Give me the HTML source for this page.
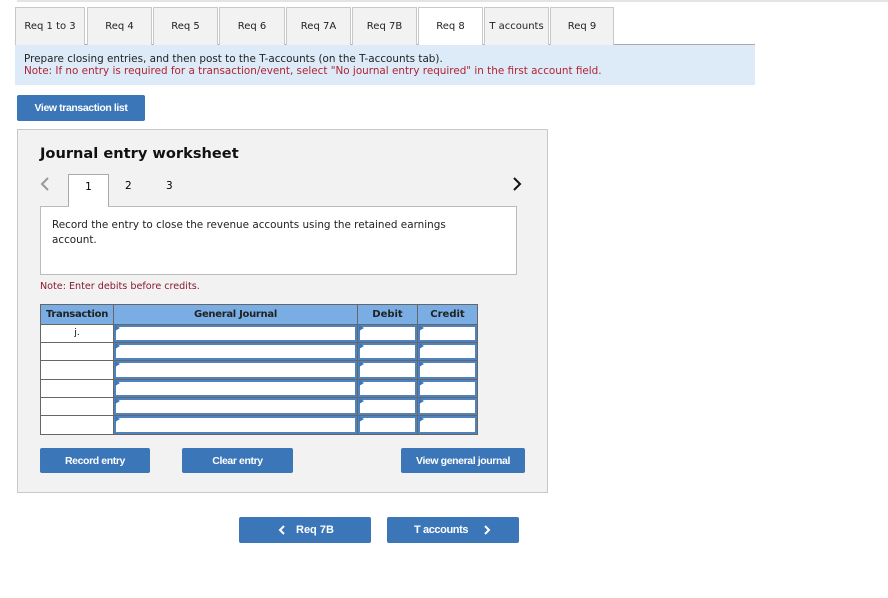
<!DOCTYPE html>
<html><head><meta charset="utf-8"><style>
*{box-sizing:border-box;margin:0;padding:0}
body{width:888px;height:598px;background:#fff;position:relative;font-family:"DejaVu Sans",Verdana,sans-serif;overflow:hidden}
.a{position:absolute}
.tab{position:absolute;top:7px;height:38px;background:#f2f2f2;border:1px solid #c8c8c8;border-bottom:none;font-size:10px;color:#222;text-align:center;line-height:38px}
.tab.on{background:#fff}
.btn{position:absolute;background:#3b76b9;color:#fff;font-family:"Liberation Sans",Arial,sans-serif;font-weight:bold;font-size:10.5px;text-align:center;border-radius:2px;letter-spacing:-0.4px}
.cell{position:absolute;background:#fff;border:2px solid #4f83c0}
.fl{position:absolute;width:0;height:0;border-top:3px solid transparent;border-bottom:3px solid transparent;border-left:5px solid #3b76b9}
</style></head><body>
<div class="a" style="left:17px;top:0;width:871px;height:2px;background:#e4e4e4"></div>
<div class="a" style="left:15px;top:44px;width:740px;height:1px;background:#aaa"></div>
<div class="tab" style="left:15px;width:70px">Req 1 to 3</div>
<div class="tab" style="left:87px;width:65px">Req 4</div>
<div class="tab" style="left:153px;width:65px">Req 5</div>
<div class="tab" style="left:219px;width:66px">Req 6</div>
<div class="tab" style="left:286px;width:65px">Req 7A</div>
<div class="tab" style="left:352px;width:65px">Req 7B</div>
<div class="tab on" style="left:418px;width:65px">Req 8</div>
<div class="tab" style="left:484px;width:65px">T accounts</div>
<div class="tab" style="left:550px;width:64px">Req 9</div>
<div class="a" style="left:15px;top:45px;width:740px;height:40px;background:#dcebf7;padding:8px 0 0 9px;font-size:10.4px;line-height:12px;color:#222;white-space:nowrap">Prepare closing entries, and then post to the T-accounts (on the T-accounts tab).<br><span style="color:#b22234">Note: If no entry is required for a transaction/event, select "No journal entry required" in the first account field.</span></div>
<div class="btn" style="left:17px;top:95px;width:128px;height:26px;line-height:26px">View transaction list</div>
<div class="a" style="left:17px;top:129px;width:531px;height:364px;background:#f2f2f2;border:1px solid #c8c8c8"></div>
<div class="a" style="left:40px;top:145px;font-size:14.6px;font-weight:bold;color:#111">Journal entry worksheet</div>
<svg class="a" style="left:40px;top:177px" width="10" height="14"><path d="M8 1L2 7L8 13" stroke="#999" stroke-width="2" fill="none"/></svg>
<svg class="a" style="left:512px;top:177px" width="10" height="14"><path d="M2 1L8 7L2 13" stroke="#111" stroke-width="2" fill="none"/></svg>
<div class="a" style="left:68px;top:174px;width:41px;height:34px;background:#fff;border:1px solid #aaa;border-bottom:none;text-align:center;font-size:10.5px;line-height:24px">1</div>
<div class="a" style="left:125px;top:180px;font-size:10.5px">2</div>
<div class="a" style="left:166px;top:180px;font-size:10.5px">3</div>
<div class="a" style="left:40px;top:206px;width:477px;height:69px;background:#fff;border:1px solid #bbb;padding:11px 0 0 11px;font-size:10.4px;line-height:15px;color:#222">Record the entry to close the revenue accounts using the retained earnings<br>account.</div>
<div class="a" style="left:69px;top:205px;width:39px;height:3px;background:#fff"></div>
<div class="a" style="left:40px;top:281px;font-size:9.6px;color:#8b1a2b">Note: Enter debits before credits.</div>
<div class="a" style="left:40px;top:304px;width:438px;height:131px;background:#666"></div>
<div class="a" style="left:41px;top:305px;width:72px;height:19px;background:#7aade3;font:bold 10px 'DejaVu Sans',sans-serif;color:#222;text-align:center;line-height:20px;letter-spacing:-0.3px">Transaction</div>
<div class="a" style="left:114px;top:305px;width:243px;height:19px;background:#7aade3;font:bold 10px 'DejaVu Sans',sans-serif;color:#222;text-align:center;line-height:20px;letter-spacing:-0.3px">General Journal</div>
<div class="a" style="left:358px;top:305px;width:59px;height:19px;background:#7aade3;font:bold 10px 'DejaVu Sans',sans-serif;color:#222;text-align:center;line-height:20px">Debit</div>
<div class="a" style="left:418px;top:305px;width:59px;height:19px;background:#7aade3;font:bold 10px 'DejaVu Sans',sans-serif;color:#222;text-align:center;line-height:20px">Credit</div>
<div class="a" style="left:41px;top:325px;width:72px;height:17px;background:#fff;text-align:center;font-size:9px;line-height:17px">j.</div>
<div class="a" style="left:41px;top:343px;width:72px;height:17px;background:#fff"></div>
<div class="a" style="left:41px;top:361px;width:72px;height:18px;background:#fff"></div>
<div class="a" style="left:41px;top:380px;width:72px;height:17px;background:#fff"></div>
<div class="a" style="left:41px;top:398px;width:72px;height:17px;background:#fff"></div>
<div class="a" style="left:41px;top:416px;width:72px;height:18px;background:#fff"></div>
<div class="cell" style="left:114px;top:325px;width:243px;height:17px"></div><div class="cell" style="left:358px;top:325px;width:59px;height:17px"></div><div class="cell" style="left:418px;top:325px;width:59px;height:17px"></div>
<div class="cell" style="left:114px;top:343px;width:243px;height:17px"></div><div class="cell" style="left:358px;top:343px;width:59px;height:17px"></div><div class="cell" style="left:418px;top:343px;width:59px;height:17px"></div>
<div class="cell" style="left:114px;top:361px;width:243px;height:18px"></div><div class="cell" style="left:358px;top:361px;width:59px;height:18px"></div><div class="cell" style="left:418px;top:361px;width:59px;height:18px"></div>
<div class="cell" style="left:114px;top:380px;width:243px;height:17px"></div><div class="cell" style="left:358px;top:380px;width:59px;height:17px"></div><div class="cell" style="left:418px;top:380px;width:59px;height:17px"></div>
<div class="cell" style="left:114px;top:398px;width:243px;height:17px"></div><div class="cell" style="left:358px;top:398px;width:59px;height:17px"></div><div class="cell" style="left:418px;top:398px;width:59px;height:17px"></div>
<div class="cell" style="left:114px;top:416px;width:243px;height:18px"></div><div class="cell" style="left:358px;top:416px;width:59px;height:18px"></div><div class="cell" style="left:418px;top:416px;width:59px;height:18px"></div>
<div class="fl" style="left:115px;top:325px"></div><div class="fl" style="left:359px;top:325px"></div><div class="fl" style="left:419px;top:325px"></div>
<div class="fl" style="left:115px;top:343px"></div><div class="fl" style="left:359px;top:343px"></div><div class="fl" style="left:419px;top:343px"></div>
<div class="fl" style="left:115px;top:361px"></div><div class="fl" style="left:359px;top:361px"></div><div class="fl" style="left:419px;top:361px"></div>
<div class="fl" style="left:115px;top:380px"></div><div class="fl" style="left:359px;top:380px"></div><div class="fl" style="left:419px;top:380px"></div>
<div class="fl" style="left:115px;top:398px"></div><div class="fl" style="left:359px;top:398px"></div><div class="fl" style="left:419px;top:398px"></div>
<div class="fl" style="left:115px;top:416px"></div><div class="fl" style="left:359px;top:416px"></div><div class="fl" style="left:419px;top:416px"></div>
<div class="btn" style="left:40px;top:448px;width:110px;height:25px;line-height:26px">Record entry</div>
<div class="btn" style="left:182px;top:448px;width:111px;height:25px;line-height:26px">Clear entry</div>
<div class="btn" style="left:401px;top:448px;width:124px;height:25px;line-height:26px">View general journal</div>
<div class="btn" style="left:239px;top:517px;width:132px;height:26px"></div>
<svg class="a" style="left:278px;top:525px" width="8" height="10"><path d="M6 1L2 5L6 9" stroke="#fff" stroke-width="2" fill="none"/></svg>
<div class="a" style="left:296px;top:517px;color:#fff;font:bold 11px/26px 'Liberation Sans',Arial,sans-serif">Req 7B</div>
<div class="btn" style="left:387px;top:517px;width:132px;height:26px"></div>
<div class="a" style="left:414px;top:517px;color:#fff;font:bold 11px/26px 'Liberation Sans',Arial,sans-serif;letter-spacing:-0.4px">T accounts</div>
<svg class="a" style="left:483px;top:525px" width="8" height="10"><path d="M2 1L6 5L2 9" stroke="#fff" stroke-width="2" fill="none"/></svg>
</body></html>
